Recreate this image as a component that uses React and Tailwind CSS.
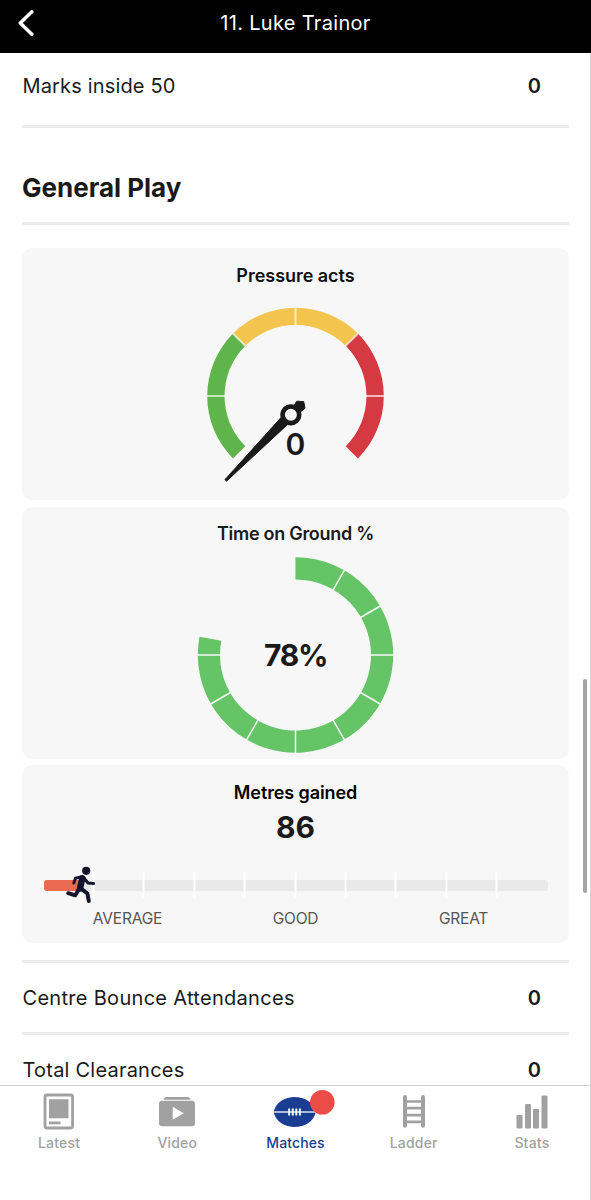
const polar = (cx, cy, r, deg) => {
  const a = ((deg - 90) * Math.PI) / 180;
  return [cx + r * Math.cos(a), cy + r * Math.sin(a)];
};

const ring = (cx, cy, ro, ri, from, to) => {
  const [x1, y1] = polar(cx, cy, ro, from);
  const [x2, y2] = polar(cx, cy, ro, to);
  const [x3, y3] = polar(cx, cy, ri, to);
  const [x4, y4] = polar(cx, cy, ri, from);
  const large = to - from > 180 ? 1 : 0;
  return `M${x1} ${y1}A${ro} ${ro} 0 ${large} 1 ${x2} ${y2}L${x3} ${y3}A${ri} ${ri} 0 ${large} 0 ${x4} ${y4}Z`;
};

function Spoke({ cx, cy, ri, ro, deg, ...rest }) {
  const [x1, y1] = polar(cx, cy, ri, deg);
  const [x2, y2] = polar(cx, cy, ro, deg);
  return <line x1={x1} y1={y1} x2={x2} y2={y2} {...rest} />;
}

function StatRow({ label, value, labelClass = "", className }) {
  return (
    <div className={`flex items-center justify-between pr-7 text-[20px] leading-6 text-[#1a1a1a] ${className}`}>
      <span className={`pl-[0.5px] ${labelClass}`}>{label}</span>
      <span className="font-semibold">{value}</span>
    </div>
  );
}

function Divider() {
  return <div className="h-[3px] shrink-0 bg-[#ebebeb]" />;
}

function PressureCard() {
  const segs = [
    [225, 315, "#5fb54b"],
    [315, 405, "#f3c54e"],
    [405, 495, "#d53a43"],
  ];
  return (
    <section className="flex h-[252px] flex-col items-center rounded-[10px] bg-[#f7f7f7] pt-4">
      <h3 className="text-[18px] leading-6 font-semibold tracking-[-0.03px] text-[#111]">Pressure acts</h3>
      <div className="mt-[15px] grid">
        <svg width="190" height="190" viewBox="0.5 0 190 190" className="col-start-1 row-start-1">
          {segs.map(([a, b, c]) => (
            <path key={c} d={ring(95, 93, 88.3, 71, a, b)} fill={c} />
          ))}
          {[270, 315, 0, 45, 90].map((d) => (
            <Spoke key={d} cx={95} cy={93} ri={70.5} ro={88.5} deg={d} stroke="#fff" strokeOpacity=".65" strokeWidth="2" />
          ))}
          <path d="M24.5 176.6L80.5 114.6L87.2 121.4L26 178.2Z" fill="#1a1a1a" stroke="#1a1a1a" strokeLinejoin="round" />
          <path d="M93.5 102.5L96.3 98.2L103.2 98.6L104.5 105.3L98.5 110Z" fill="#1a1a1a" stroke="#1a1a1a" strokeLinejoin="round" />
          <circle cx="90.4" cy="111.8" r="8.3" fill="#f7f7f7" stroke="#1a1a1a" strokeWidth="4.6" />
        </svg>
        <span className="col-start-1 row-start-1 mt-[123px] justify-self-center text-[30px] leading-9 font-semibold text-[#1a1a1a]">0</span>
      </div>
    </section>
  );
}

function TimeCard() {
  return (
    <section className="flex h-[252px] flex-col items-center rounded-[10px] bg-[#f7f7f7] pt-[15.5px]">
      <h3 className="text-[18px] leading-6 font-semibold tracking-[-0.28px] text-[#1a1a1a]">Time on Ground %</h3>
      <div className="mt-[8.5px] grid place-items-center">
        <svg width="200" height="200" viewBox="0.5 0 200 200" className="col-start-1 row-start-1">
          <path d={ring(100, 100, 97.7, 75.5, 0, 280.8)} fill="#65c466" />
          {[30, 60, 90, 120, 150, 180, 210, 240, 270].map((d) => (
            <Spoke key={d} cx={100} cy={100} ri={75} ro={98.5} deg={d} stroke="#f7f7f7" strokeWidth="1.5" />
          ))}
        </svg>
        <span className="col-start-1 row-start-1 text-[30px] leading-9 font-bold tracking-[-1.3px] text-[#1a1a1a]">78%</span>
      </div>
    </section>
  );
}

function Runner() {
  return (
    <svg width="31" height="38" viewBox="0 0 31 38" fill="none" stroke="#14142f" strokeLinecap="round" strokeLinejoin="round">
      <circle cx="21.2" cy="4.8" r="4.1" fill="#14142f" stroke="none" />
      <path d="M17.3 12.3L15 22.5" strokeWidth="6.4" />
      <path d="M17 10.6L10.5 12.2L8.8 17M19 12L23 17L28.6 17.6" strokeWidth="3" />
      <path d="M14 23L10.3 29.3L3.2 27.2M16 22.5L22.4 27.5L23.8 35" strokeWidth="4" />
    </svg>
  );
}

function MetresCard() {
  return (
    <section className="flex h-[178px] flex-col rounded-[10px] bg-[#f7f7f7] px-[21.5px] pt-4 text-center">
      <h3 className="text-[18px] leading-6 font-semibold tracking-[-0.1px] text-black">Metres gained</h3>
      <p className="mt-1 text-[30px] leading-9 font-bold text-[#1a1a1a]">86</p>
      <div className="relative mt-[27px] flex h-[26px] items-center">
        <div className="h-[11px] w-full rounded-[3px] bg-[#e9e9e9]">
          <div className="h-full w-[38px] rounded-l-[3px] bg-[#e96a50]" />
        </div>
        <div className="absolute inset-0 grid grid-cols-10">
          {Array.from({ length: 9 }, (_, i) => (
            <i key={i} className="translate-x-[0.5px] border-r-2 border-white" />
          ))}
        </div>
        <div className="absolute top-[-6.5px] left-[21px]">
          <Runner />
        </div>
      </div>
      <div className="mt-[9px] grid grid-cols-3 text-[15.5px] leading-6 tracking-[-0.2px] text-[#555]">
        <span>AVERAGE</span>
        <span>GOOD</span>
        <span>GREAT</span>
      </div>
    </section>
  );
}

const icons = {
  Latest: (
    <svg width="32" height="38" viewBox="0 0 32 38">
      <rect x="2" y="2" width="27.6" height="33" rx="2" fill="none" stroke="#a1a1a1" strokeWidth="2.8" />
      <path d="M6 6.2h19.5v19H6zM6 28.6h11.5v2.6H6z" fill="#a1a1a1" />
    </svg>
  ),
  Video: (
    <svg width="38" height="38" viewBox="0 0 38 38" fill="#a1a1a1">
      <path d="M5.5 6.8Q6 4 8.5 4h21Q32 4 32.5 6.8z" />
      <path fillRule="evenodd" d="M4 7.8h30q3 0 3 3v19.5q0 3-3 3H4q-3 0-3-3V10.8q0-3 3-3zM14.7 13.8v13l11.2-6.5z" />
    </svg>
  ),
  Matches: (
    <svg width="64" height="38" viewBox="0 0 64 38">
      <path d="M10.7 19C12.5 9 22.5 4 31.7 4s19.2 5 21 15C50.9 29 40.9 34 31.7 34S12.5 29 10.7 19Z" fill="#193d92" />
      <path d="M10.7 19h42" stroke="#dce3f3" strokeWidth="1.7" />
      <path d="M26.2 15.6v7M29.8 15.6v7M33.3 15.6v7M36.9 15.6v7" stroke="#fff" strokeWidth="1.9" />
      <circle cx="59.3" cy="9.2" r="12.3" fill="#eb4c47" />
    </svg>
  ),
  Ladder: (
    <svg width="24" height="38" viewBox="0 0 24 38" stroke="#a1a1a1" fill="none">
      <path d="M3 4v28.7M21 4v28.7" strokeWidth="4" strokeLinecap="round" />
      <path d="M3 8.5h18M3 15.2h18M3 22.2h18M3 28.8h18" strokeWidth="2.7" />
    </svg>
  ),
  Stats: (
    <svg width="32" height="38" viewBox="0 0 32 38" fill="#a1a1a1">
      <rect x=".5" y="22" width="6" height="13.5" rx="1.2" />
      <rect x="9" y="11" width="6" height="24.5" rx="1.2" />
      <rect x="17" y="16" width="6" height="19.5" rx="1.2" />
      <rect x="25.5" y="2.5" width="6" height="33" rx="1.2" />
    </svg>
  ),
};

function TabBar() {
  return (
    <nav className="grid h-[115px] shrink-0 grid-cols-5 items-start border-t border-[#d0d0d0] bg-white pt-[7px] text-[#a1a1a1]">
      {Object.entries(icons).map(([name, icon]) => (
        <div
          key={name}
          className={`flex flex-col items-center text-[14px] leading-5 font-medium [&>svg]:overflow-visible ${name === "Matches" ? "tracking-[0.1px] text-[#193d92]" : "tracking-[0.2px]"}`}
        >
          {icon}
          <span className="mt-[2px]">{name}</span>
        </div>
      ))}
    </nav>
  );
}

export default function App() {
  return (
    <div className="relative flex h-[1200px] w-[591px] flex-col overflow-hidden bg-white font-['Inter',sans-serif]">
      <header className="grid h-[53px] shrink-0 grid-cols-[60px_1fr_60px] items-center bg-black pb-[7px] text-white">
        <svg width="18" height="28" viewBox="0 0 18 28" fill="none" className="ml-[18px]">
          <path d="M13.8 2.8L2.3 14L13.8 25.2" stroke="currentColor" strokeWidth="3.5" strokeLinecap="round" strokeLinejoin="round" />
        </svg>
        <h1 className="text-center text-[20px] leading-6 tracking-[0.32px]">11. Luke Trainor</h1>
      </header>
      <main className="flex min-h-0 flex-1 flex-col overflow-hidden px-[22px]">
        <StatRow label="Marks inside 50" value="0" labelClass="tracking-[0.16px]" className="h-[72px] shrink-0 pb-[6px]" />
        <Divider />
        <div className="flex h-[94px] shrink-0 items-center pt-[26px]">
          <h2 className="text-[26px] leading-8 font-bold text-[#1a1a1a]">General Play</h2>
        </div>
        <Divider />
        <div className="mt-[23px] flex w-[547px] shrink-0 flex-col gap-[6.5px]">
          <PressureCard />
          <TimeCard />
          <MetresCard />
        </div>
        <div className="mt-[17px]">
          <Divider />
          <StatRow label="Centre Bounce Attendances" value="0" labelClass="tracking-[0.3px]" className="h-[69px]" />
          <Divider />
          <StatRow label="Total Clearances" value="0" labelClass="tracking-[0.22px]" className="h-[69px]" />
        </div>
      </main>
      <TabBar />
      <div className="absolute top-[679px] right-[4px] h-[214px] w-[4px] rounded-full bg-[#a5a5a5]" />
      <div className="absolute top-[53px] right-0 bottom-0 w-px bg-[#d5d5d5]" />
    </div>
  );
}
